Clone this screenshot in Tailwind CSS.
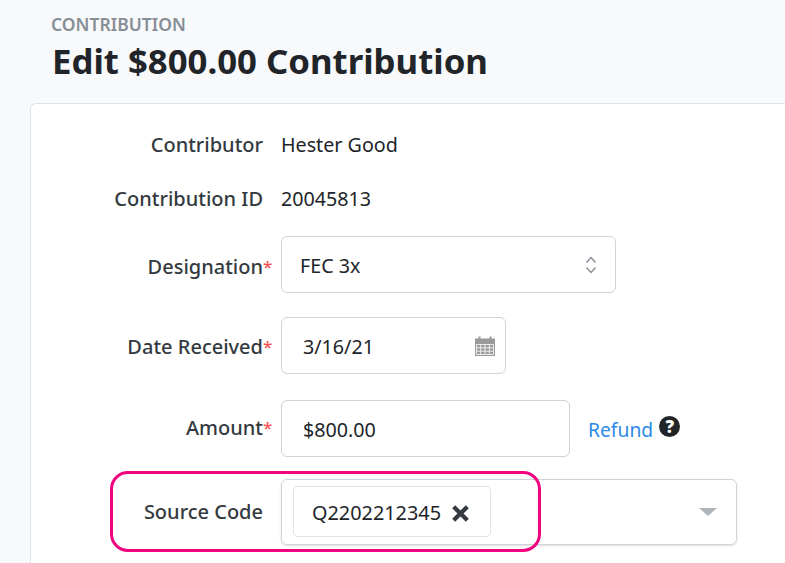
<!DOCTYPE html>
<html>
<head>
<meta charset="utf-8">
<script src="https://cdn.jsdelivr.net/npm/@tailwindcss/browser@4"></script>
</head>
<body class="m-0 h-[563px] w-[785px] overflow-hidden bg-[#f8f9fa] font-['Noto_Sans','Open_Sans',sans-serif] text-[#212529]">
<header class="h-[103px] pl-[51px] pt-[13px]">
  <div class="h-[23px] text-[17.5px] leading-[23px] font-semibold text-[#868e96]">CONTRIBUTION</div>
  <h1 class="ml-[1px] h-[50px] text-[34.75px] leading-[50px] font-bold text-[#212529]">Edit $800.00 Contribution</h1>
</header>
<main class="relative ml-[30px] h-[460px] w-[755px] rounded-tl-[6px] border-t border-l border-[#dee2e6] bg-white pt-[25px] text-[19.7px] leading-[30px]">
  <div class="flex h-[30px] items-center gap-[18px]">
    <div class="w-[232px] pt-[2px] text-right text-[20px] font-medium text-[#343a40]">Contributor</div>
    <div class="pt-[2px]">Hester Good</div>
  </div>
  <div class="mt-[24px] flex h-[30px] items-center gap-[18px]">
    <div class="w-[232px] pt-[2px] text-right text-[20px] font-medium text-[#343a40]">Contribution ID</div>
    <div class="pt-[2px]">20045813</div>
  </div>
  <div class="mt-[23px] flex h-[57px] items-center gap-[18px]">
    <div class="relative w-[232px] pt-[4px] text-right text-[20px] font-medium text-[#343a40]">Designation<span class="absolute left-full text-[17px] text-[#fa5252]">*</span></div>
    <div class="flex h-[57px] w-[335px] items-center justify-between rounded-[6px] border border-[#ced4da] pl-[18px] pr-[18px]">
      <span class="pt-[2px]">FEC 3x</span>
      <svg class="h-[20px] w-[12px]" viewBox="0 0 12 20" fill="none" stroke="#868e96" stroke-width="1.4"><path d="M1.5 7.500 6 2.500l4.500 5M1.500 12.500 6 17.500l4.500-5"/></svg>
    </div>
  </div>
  <div class="mt-[24px] flex h-[57px] items-center gap-[18px]">
    <div class="relative w-[232px] pt-[2px] text-right text-[20px] font-medium text-[#343a40]">Date Received<span class="absolute left-full text-[17px] text-[#fa5252]">*</span></div>
    <div class="flex h-[57px] w-[225px] items-center justify-between rounded-[6px] border border-[#ced4da] pl-[21px] pr-[10px]">
      <span class="pt-[2px]">3/16/21</span>
      <svg class="h-[20px] w-[20px]" viewBox="0 0 20 20"><path fill="#9a9a9a" d="M0 2.500h3.500V0.500h2v2h9V0.500h2v2H20V20H0z"/><path fill="none" stroke="#fff" stroke-width="0.8" d="M1.500 8.500h17v10h-17zM1.500 11.800h17M1.500 15.200h17M5.700 8.500v10M10 8.500v10M14.300 8.500v10"/></svg>
    </div>
  </div>
  <div class="mt-[26px] flex h-[57px] items-center gap-[18px]">
    <div class="relative w-[232px] pb-[2px] text-right text-[20px] font-medium text-[#343a40]">Amount<span class="absolute left-full text-[17px] text-[#fa5252]">*</span></div>
    <div class="flex h-[57px] w-[289px] items-center rounded-[6px] border border-[#ced4da] pl-[21px] pt-[2px]">$800.00</div>
    <a class="pt-[2px] text-[19.3px] text-[#2b8ae8]">Refund</a>
    <div class="-ml-[12px] flex h-[21px] w-[21px] -translate-y-[2px] items-center justify-center rounded-full bg-[#212529] text-[17px] leading-[21px] font-black text-white">?</div>
  </div>
  <div class="mt-[22px] flex h-[66px] items-center gap-[18px]">
    <div class="w-[232px] text-right text-[20px] font-medium text-[#343a40]">Source Code</div>
    <div class="flex h-[66px] w-[456px] items-center justify-between rounded-[6px] border border-[#ced4da] pl-[11px] pr-[19px] shadow-sm">
      <div class="mb-[2px] flex h-[51px] w-[198px] items-center rounded-[5px] border border-[#dee2e6] pl-[18px] pt-[4px]">
        <span class="text-[19.85px]">Q2202212345</span>
        <svg class="ml-[11px] h-[17px] w-[17px]" viewBox="0 0 16 16" stroke="#343a40" stroke-width="4" stroke-linecap="square"><path d="M3 3l10 10M13 3 3 13"/></svg>
      </div>
      <div class="h-0 w-0 border-x-[9px] border-t-[8px] border-x-transparent border-t-[#adb5bd]"></div>
    </div>
  </div>
  <div class="absolute left-[79px] top-[367px] h-[81px] w-[431px] rounded-[18px] border-[3px] border-[#f0047f]"></div>
</main>
</body>
</html>
